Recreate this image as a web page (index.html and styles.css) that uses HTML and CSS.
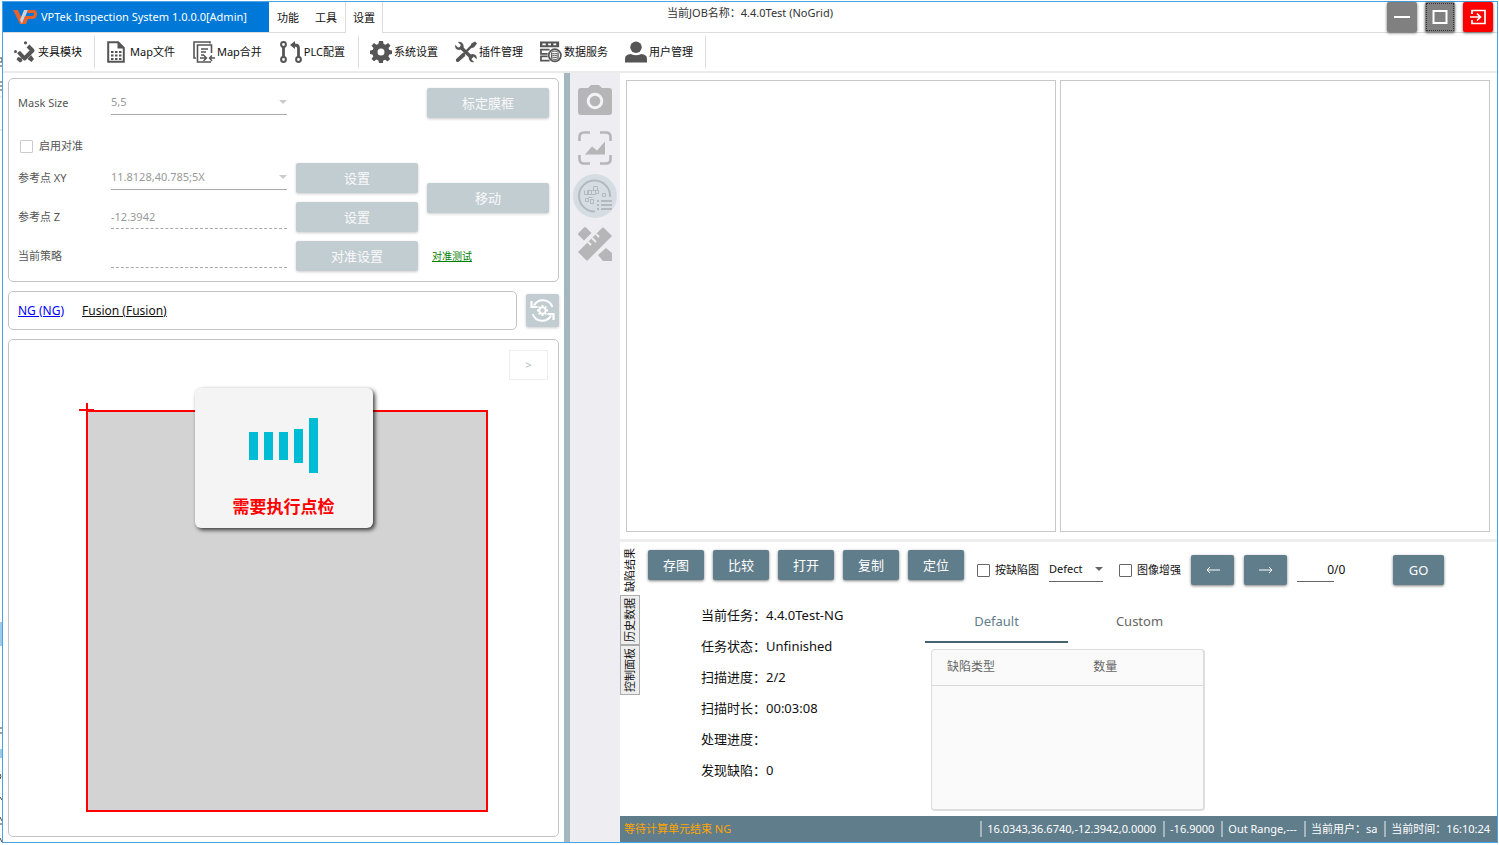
FILE: index.html
```html
<!DOCTYPE html>
<html lang="zh-CN">
<head>
<meta charset="utf-8">
<title>VPTek Inspection System</title>
<link rel="stylesheet" href="styles.css">
</head>
<body>
<svg class="desktop-edge" viewBox="0 0 3 845" aria-hidden="true">
  <path d="M0 58h2v4H0M0 66h2M0 82h2M0 86h3M0 90h2M0 728h2M0 733h2M0 774q2 2 0 5M0 797l2 3M0 817l2 4M0 824h3M0 838l2 4" fill="none" stroke="#444"/>
  <path d="M0 97h3M0 130h3" stroke="#ddd"/>
  <path d="M0 622h2v24H0zM0 749h2v9H0z" fill="#9ccbee"/>
</svg>
<div class="window">
  <header class="titlebar">
    <div class="app-title">
      <svg class="logo" width="24" height="16" viewBox="0 0 24 16" aria-hidden="true">
        <path d="M0 1h5l4 9 2 5H7z" fill="#e8622c"/>
        <path d="M11 1h4L9 15 7 11z" fill="#c9d3df"/>
        <path d="M15 1h6q3 0 3 4t-4 5h-5l-2 5H9l3-8h7q2 0 2-2t-2-1h-5z" fill="#e8622c"/>
      </svg>
      <span>VPTek Inspection System 1.0.0.0[Admin]</span>
    </div>
    <nav class="menu">
      <button class="menu-tab">功能</button>
      <button class="menu-tab">工具</button>
      <button class="menu-tab active">设置</button>
    </nav>
    <div class="job-name">当前JOB名称：4.4.0Test (NoGrid)</div>
    <div class="window-buttons">
      <button class="win-btn" aria-label="Minimize"><svg width="18" height="18" viewBox="0 0 18 18"><path d="M1 9h16" stroke="#fff" stroke-width="2"/></svg></button>
      <button class="win-btn focused" aria-label="Maximize"><svg width="18" height="18" viewBox="0 0 18 18"><rect x="2.500" y="3" width="13" height="12" fill="none" stroke="#fff" stroke-width="2"/></svg></button>
      <button class="win-btn exit" aria-label="Exit"><svg width="18" height="18" viewBox="0 0 18 18"><path d="M3 6V2.500h13v13H3V12M1 9h10M8 5.500 11.500 9 8 12.500" fill="none" stroke="#fff" stroke-width="1.700"/></svg></button>
    </div>
  </header>

  <div class="toolbar">
    <div class="tool-group">
      <button class="tool"><svg width="22" height="22" viewBox="0 0 22 22"><path d="M4.500 11 10.500 17.500 18.500 9.500 14 5" fill="none" stroke="#555" stroke-width="4" stroke-linejoin="round"/><path d="M17 14l3 4-2.500 3-4-3zM4 16l3.500 1 1 3-2.500 1.500-3.500-3z" fill="#555"/><circle cx="11.500" cy="1.800" r="1.600" fill="#555"/><circle cx="1.500" cy="10.500" r="1.500" fill="#555"/></svg>夹具模块</button>
    </div>
    <div class="tool-group wide">
      <button class="tool doc"><svg width="18" height="22" viewBox="0 0 18 22"><path d="M1.200 1.200h10l5.600 5.600v14H1.200z" fill="none" stroke="#555" stroke-width="2"/><path d="M10.500 1v6.500H17z" fill="#555"/><path d="M4 11h2.500M8 11h2.500M12 11h2.500M4 14.500h2.500M8 14.500h2.500M12 14.500h2.500M4 18h2.500M8 18h2.500M12 18h2.500" stroke="#555" stroke-width="1.800"/></svg>Map文件</button>
      <button class="tool"><svg width="22" height="22" viewBox="0 0 22 22"><path d="M17 2.500V1H1v16h2M18.500 12V4H4.500v17h13.500M8 8h7M8 11h5M8 14h3" fill="none" stroke="#555" stroke-width="1.600"/><path d="M7 17h6M10.500 14l3 3-3 3M22 17h-5M19 14.500 16.500 17l2.500 3" fill="none" stroke="#555" stroke-width="1.400"/></svg>Map合并</button>
      <button class="tool"><svg width="22" height="22" viewBox="0 0 22 22"><g fill="none" stroke="#555" stroke-width="2"><circle cx="3.500" cy="3.500" r="2.400"/><circle cx="3.500" cy="18.500" r="2.400"/><circle cx="18.500" cy="18.500" r="2.400"/></g><path d="M3.500 6v10M18.500 16V7q0-3-4-3h-2" fill="none" stroke="#555" stroke-width="2.800"/><path d="M10 4l5-4v8z" fill="#555"/></svg>PLC配置</button>
    </div>
    <div class="tool-group">
      <button class="tool"><svg width="22" height="22" viewBox="0 0 22 22"><path d="M9 0h4l.6 3 2 .8L18.200 2 20.500 4.800 18.500 7l.8 2 2.700.5v3.500l-2.800.6-.8 2 1.800 2.500-2.700 2.300-2.300-1.700-2 .8L13 22H9l-.6-2.600-2-.8L4 20.300 1.500 18l1.800-2.500-.8-2L0 13V9.500L2.700 9l.8-2-2-2.300L4 2l2.400 1.800 2-.8zM11 7.500a3.500 3.500 0 1 0 0 7 3.500 3.500 0 0 0 0-7z" fill="#555" fill-rule="evenodd"/></svg>系统设置</button>
      <button class="tool"><svg width="22" height="22" viewBox="0 0 23 22"><path d="M2 20.500 18.500 3.500" stroke="#555" stroke-width="2.400"/><path d="M1 18.500 8 12l3 3-7.500 6.500q-3 0-2.500-3zM17 2l4-2 2 2-3 4-3 1z" fill="#555"/><path d="M5.500 5.500 18 17.500" stroke="#555" stroke-width="3.600"/><path d="M3 .5 6 3.500l-.6 2.200-2.300.6L.3 3.500Q-.5 7 2.200 8.500q2 1 4 0L9 6.500Q9.500 3 7 1 5-.3 3 .5zM20 21.500l-3-3 .5-2 2.300-.6 2.700 2.700Q23.500 15 20.500 13.500q-2-1-4 .2L14.500 16q-.6 3 1.500 4.800 2 1.500 4 .7z" fill="#555"/></svg>插件管理</button>
      <button class="tool"><svg width="22" height="22" viewBox="0 0 23 22"><path d="M0 0h20v6H0zM2.500 2v2H6V2zm6 0v2h3V2zm5.500 0v2h3V2z" fill="#555" fill-rule="evenodd"/><path d="M10 8.500H1V13h7M8 15.500H1V20h9" fill="none" stroke="#555" stroke-width="1.800"/><circle cx="15.500" cy="14.500" r="6.400" fill="#fff" stroke="#555" stroke-width="1.800"/><ellipse cx="15.500" cy="11.500" rx="3.400" ry="1.400" fill="none" stroke="#555"/><path d="M12 12v6q3.500 2 7 0v-6M12 14q3.500 2 7 0M12 16q3.500 2 7 0" fill="none" stroke="#555"/></svg>数据服务</button>
      <button class="tool"><svg width="22" height="22" viewBox="0 0 23 22"><circle cx="11.500" cy="6" r="6" fill="#555"/><path d="M0 22v-4q0-4.500 6-5 5.500 3 11 0 6 .5 6 5v4z" fill="#555"/></svg>用户管理</button>
    </div>
  </div>

  <main class="main">
    <section class="left">
      <form class="card align-form">
        <label class="f-label" for="mask">Mask Size</label>
        <span class="picker"><select id="mask" disabled><option>5,5</option></select></span>
        <button type="button" class="btn c4" disabled>标定膜框</button>
        <label class="check dim check-row"><input type="checkbox" disabled>启用对准</label>
        <label class="f-label" for="refxy">参考点 XY</label>
        <span class="picker"><select id="refxy" disabled><option>11.8128,40.785;5X</option></select></span>
        <button type="button" class="btn" disabled>设置</button>
        <button type="button" class="btn move" disabled>移动</button>
        <label class="f-label" for="refz">参考点 Z</label>
        <input class="line-input" id="refz" value="-12.3942" disabled>
        <button type="button" class="btn" disabled>设置</button>
        <label class="f-label" for="plan">当前策略</label>
        <input class="line-input" id="plan" disabled>
        <button type="button" class="btn" disabled>对准设置</button>
        <a class="test-link" href="#">对准测试</a>
      </form>

      <div class="link-row">
        <nav class="card links"><a class="blue" href="#">NG (NG)</a><a href="#">Fusion (Fusion)</a></nav>
        <button class="refresh" disabled aria-label="Refresh"><svg width="25" height="25" viewBox="0 0 25 25"><path d="M4 7.500A10 10 0 0 1 22.300 9M2.700 16a10 10 0 0 0 18.300 1.500" fill="none" stroke="#fff" stroke-width="1.900"/><path d="M1.500 3v6h6M23.500 22v-6h-6" fill="none" stroke="#fff" stroke-width="2.200"/><circle cx="12.500" cy="12.500" r="3.200" fill="none" stroke="#fff" stroke-width="2"/><path d="M12.500 7v2.500M12.500 15.500V18M7 12.500h2.500M15.500 12.500H18M8.600 8.600l1.700 1.700M14.700 14.700l1.700 1.700M16.400 8.600l-1.700 1.700M10.300 14.700l-1.700 1.700" stroke="#fff" stroke-width="1.800"/></svg></button>
      </div>

      <div class="card map">
        <svg class="wafer" viewBox="0 0 549 496" aria-hidden="true">
          <rect x="78" y="71" width="400" height="400" fill="#d3d3d3" stroke="#f00" stroke-width="2"/>
          <path d="M70 70h15M78 63v14" stroke="#f00" stroke-width="2"/>
        </svg>
        <button class="expand" disabled>&gt;</button>
        <div class="notice" role="status">
          <svg width="70" height="56" viewBox="0 0 70 56" aria-hidden="true"><path d="M0 14h9v28H0zM15 14h9v28h-9zM30 14h9v28h-9zM45 11h9v34h-9zM60 0h9v55h-9z" fill="#00bcd4"/></svg>
          <p>需要执行点检</p>
        </div>
      </div>
    </section>

    <div class="splitter"></div>

    <aside class="side-tools">
      <button aria-label="Camera"><svg width="34" height="32" viewBox="0 0 34 32"><path d="M3 4h7l3-3h8l3 3h7q3 0 3 3v21q0 3-3 3H3q-3 0-3-3V7q0-3 3-3z" fill="#b6b6b8"/><circle cx="17" cy="17" r="6.800" fill="none" stroke="#f3f3f6" stroke-width="3"/></svg></button>
      <button aria-label="Image"><svg width="34" height="34" viewBox="0 0 34 34"><path d="M1.500 10V6q0-4.500 4.500-4.500h6M22 1.500h6q4.500 0 4.500 4.500v4M32.500 24v4q0 4.500-4.500 4.500h-6M12 32.500H6q-4.500 0-4.500-4.500v-4" fill="none" stroke="#b6b6b8" stroke-width="2.600"/><path d="M7 23.500l7-8 5 4 8-9v13z" fill="#b6b6b8"/></svg></button>
      <button class="selected" aria-label="Wafer map"><svg width="34" height="34" viewBox="0 0 34 34"><path d="M32 18A15.500 15.500 0 1 0 17 32.500" fill="none" stroke="#b3b9be" stroke-width="2"/><path d="M9.500 11.500h4v4h-4zM15.500 7.500h4v4h-4zM17.500 11.500h3v3h-3zM13.500 11.500h4v4h-4zM6.500 15.500h4v-4M6.500 11.500v4M7.500 19.500h3v3h-3zM12.500 20.500h3v4h-3zM10.500 18.500h4M24.500 14.500h3v3h-3z" fill="none" stroke="#b3b9be"/><path d="M19 22h2M23 22h11M19 26h2M23 26h11M19 30h2M23 30h11" stroke="#b3b9be" stroke-width="1.800"/></svg></button>
      <button aria-label="Measure"><svg width="34" height="34" viewBox="0 0 34 34"><path d="M0 25 24 1q1-1 2 0l8 8L10 33q-1 1-2 0z" fill="#b6b6b8"/><path d="M10 15l3 3M14 11l4 4M18 7l3 3" stroke="#ededf2" stroke-width="2"/><path d="M8 .5 13.500 6 6 13.500.5 8q-1-1 0-2L6 .5q1-1 2 0zM28 21l6 5v8h-9l-5-6z" fill="#b6b6b8"/></svg></button>
    </aside>

    <section class="right">
      <div class="views"><div class="view"></div><div class="view"></div></div>
      <div class="bottom">
        <div class="v-tabs">
          <button class="v-tab active">缺陷结果</button>
          <button class="v-tab">历史数据</button>
          <button class="v-tab">控制面板</button>
        </div>
        <div class="results">
          <div class="actions">
            <div class="action-set">
              <button class="btn small">存图</button><button class="btn small">比较</button><button class="btn small">打开</button><button class="btn small">复制</button><button class="btn small">定位</button>
            </div>
            <div class="filter-set">
              <label class="check"><input type="checkbox">按缺陷图</label>
              <span class="picker dark"><select aria-label="Defect"><option>Defect</option></select></span>
              <label class="check enhance"><input type="checkbox">图像增强</label>
              <button class="btn arrow" aria-label="Previous"><svg width="14" height="8" viewBox="0 0 14 8"><path d="M14 4H1M4 1 1 4l3 3" fill="none" stroke="#fff"/></svg></button>
              <button class="btn arrow" aria-label="Next"><svg width="14" height="8" viewBox="0 0 14 8"><path d="M0 4h13M10 1l3 3-3 3" fill="none" stroke="#fff"/></svg></button>
              <div class="pager"><input value="0" aria-label="Page"><span>/0</span></div>
              <button class="btn go">GO</button>
            </div>
          </div>
          <div class="detail">
            <dl class="info">
              <div><dt>当前任务：</dt><dd>4.4.0Test-NG</dd></div>
              <div><dt>任务状态：</dt><dd>Unfinished</dd></div>
              <div><dt>扫描进度：</dt><dd>2/2</dd></div>
              <div><dt>扫描时长：</dt><dd>00:03:08</dd></div>
              <div><dt>处理进度：</dt><dd></dd></div>
              <div><dt>发现缺陷：</dt><dd>0</dd></div>
            </dl>
            <div class="defects">
              <div class="d-tabs"><button class="d-tab active">Default</button><button class="d-tab">Custom</button></div>
              <div class="table-box">
                <table><thead><tr><th>缺陷类型</th><th>数量</th></tr></thead></table>
              </div>
            </div>
          </div>
        </div>
      </div>
      <footer class="status">
        <span class="state">等待计算单元结束 NG</span>
        <span class="s-item">16.0343,36.6740,-12.3942,0.0000</span>
        <span class="s-item">-16.9000</span>
        <span class="s-item">Out Range,---</span>
        <span class="s-item">当前用户：sa</span>
        <span class="s-item">当前时间：16:10:24</span>
      </footer>
    </section>
  </main>
</div>
</body>
</html>
```
FILE: styles.css
```css
* { box-sizing: border-box; }
body {
  margin: 0;
  height: 100vh;
  padding: 1px 1px 2px 2px;
  background: #fff;
  color: #111;
  font: 11px/16px "Noto Sans", "Noto Sans CJK SC", sans-serif;
}
button, input, select { font: inherit; color: inherit; margin: 0; padding: 0; border: 0; background: none; }
svg { display: block; flex: none; }
.desktop-edge { position: absolute; left: 0; top: 0; width: 3px; height: 845px; }

.window {
  position: relative;
  display: flex;
  flex-direction: column;
  height: 100%;
  border: 1px solid #4ba3e3;
  background: #fff;
}

.titlebar { position: relative; display: flex; flex: none; height: 31px; border-bottom: 1px solid #dcdcdc; }
.app-title {
  display: flex;
  align-items: center;
  gap: 4px;
  width: 266px;
  padding-left: 10px;
  background: #0078d7;
  color: #fff;
  white-space: nowrap;
}
.menu { display: flex; }
.menu-tab { width: 38px; height: 31px; }
.menu-tab.active { background: #fff; border: 1px solid #dcdcdc; border-width: 0 1px; }
.job-name { position: absolute; left: 0; right: 0; top: 3px; text-align: center; color: #333; pointer-events: none; }
.window-buttons { display: flex; gap: 8px; margin-left: auto; padding-right: 4px; }
.win-btn {
  display: flex;
  align-items: center;
  justify-content: center;
  width: 30px;
  height: 30px;
  border-radius: 2px;
  background: #808080;
  box-shadow: 0 1px 3px rgba(0, 0, 0, .6);
}
.win-btn.focused { outline: 1px dotted #333; outline-offset: -2px; }
.win-btn.exit { background: #f00; }

.toolbar { display: flex; align-items: center; flex: none; height: 40px; border-bottom: 2px solid #ebebeb; }
.tool-group { display: flex; align-items: center; gap: 17px; height: 32px; padding: 0 12px 0 11px; border-right: 1px solid #dcdcdc; }
.tool-group.wide { gap: 18px; padding: 0 13px 0 12px; }
.tool { display: flex; align-items: center; gap: 2px; white-space: nowrap; }
.tool.doc { gap: 5px; }

.main { flex: 1; display: grid; grid-template-columns: 561fr 6px 50px 877fr; min-height: 0; }
.left { display: flex; flex-direction: column; gap: 9px; padding: 5px; min-width: 0; }
.card { border: 1px solid #c4c4c4; border-radius: 5px; background: #fff; }
.splitter { background: #a4b6bf; }

.align-form {
  display: grid;
  grid-template-columns: 84px minmax(0, 1fr) 122px 122px;
  grid-template-rows: 30px 27px 30px 30px 30px;
  gap: 9px;
  padding: 9px 9px 10px;
}
.f-label { align-self: center; color: #555; }
.picker { position: relative; align-self: center; height: 24px; border-bottom: 1px solid #aaa; color: #999; }
.picker select { width: 100%; height: 22px; appearance: none; opacity: 1; }
.picker::after {
  content: "";
  position: absolute;
  right: 0;
  top: 9px;
  border: 4px solid transparent;
  border-top-color: #ccc;
  border-bottom: 0;
  pointer-events: none;
}
.btn {
  display: flex;
  align-items: center;
  justify-content: center;
  height: 30px;
  border-radius: 2px;
  background: #607d8b;
  color: #fff;
  font-size: 13px;
  box-shadow: 0 1px 3px rgba(0, 0, 0, .5);
}
.btn:disabled { background: #c2cdd2; color: #fafafa; box-shadow: 0 1px 3px rgba(0, 0, 0, .2); }
.c4 { grid-column: 4; }
.check { display: flex; align-items: center; gap: 5px; white-space: nowrap; }
.check input { appearance: none; width: 13px; height: 13px; border: 1px solid #666; border-radius: 1px; }
.check.dim { gap: 6px; color: #555; }
.check.dim input { border-color: #ccc; }
.check-row { grid-column: 1 / 5; align-self: end; padding-left: 2px; }
.move { grid-column: 4; grid-row: 3 / 5; align-self: center; }
.line-input { align-self: center; width: 100%; height: 24px; border-bottom: 1px dashed #aaa; color: #999; }
.test-link { align-self: center; padding-left: 5px; color: #008000; font-size: 10px; }

.link-row { display: flex; align-items: center; gap: 9px; }
.links { flex: 1; display: flex; align-items: center; gap: 18px; height: 39px; padding: 0 9px; font-size: 12px; }
.links a { color: #111; }
.links a.blue { color: #00f; }
.refresh {
  display: flex;
  align-items: center;
  justify-content: center;
  width: 33px;
  height: 33px;
  border-radius: 2px;
  background: #c2cdd2;
  box-shadow: 0 1px 3px rgba(0, 0, 0, .2);
}

.map { position: relative; flex: 1; min-height: 0; }
.wafer { width: 100%; height: 100%; }
.expand { position: absolute; right: 10px; top: 10px; width: 39px; height: 30px; border: 1px solid #eee; color: #bbb; }
.notice {
  position: absolute;
  top: 48px;
  left: 50%;
  transform: translateX(-50%);
  display: flex;
  flex-direction: column;
  align-items: center;
  gap: 21px;
  width: 178px;
  height: 140px;
  padding-top: 30px;
  border-radius: 6px;
  background: #f4f4f4;
  box-shadow: 2px 2px 4px rgba(0, 0, 0, .75);
}
.notice p { margin: 0; color: #f00; font-size: 17px; font-weight: 700; line-height: 24px; }

.side-tools { display: flex; flex-direction: column; align-items: center; gap: 4px; padding-top: 5px; background: #ededf2; }
.side-tools button { display: flex; align-items: center; justify-content: center; width: 44px; height: 44px; border-radius: 50%; }
.side-tools .selected { background: #d6dde2; }

.right { display: flex; flex-direction: column; min-width: 0; }
.views { flex: 1; display: flex; gap: 4px; padding: 7px 7px 7px 6px; }
.view { flex: 1; border: 1px solid #c8c8c8; }
.bottom { display: flex; height: 277px; border-top: 3px solid #eee; }
.v-tabs { width: 20px; padding-top: 3px; }
.v-tab {
  display: flex;
  align-items: center;
  justify-content: center;
  width: 20px;
  height: 50px;
  border: 1px solid #acacac;
  background: #eee;
  writing-mode: vertical-rl;
  text-orientation: sideways;
  transform: rotate(180deg);
  white-space: nowrap;
}
.v-tab.active { border-color: transparent; background: #fff; }
.results { flex: 1; padding: 8px 8px 0; }
.actions { display: flex; align-items: flex-start; gap: 13px; height: 50px; }
.action-set { display: flex; gap: 9px; }
.btn.small { width: 56px; }
.filter-set { display: flex; align-items: center; gap: 10px; padding-top: 5px; }
.picker.dark { width: 54px; border-color: #666; color: #111; }
.picker.dark::after { border-top-color: #666; }
.enhance { margin-left: 6px; }
.arrow { width: 43px; }
.pager { display: flex; align-items: center; width: 86px; font-size: 12px; }
.pager input { width: 37px; height: 24px; border-bottom: 1px solid #666; text-align: right; }
.go { width: 51px; }

.detail { display: flex; padding-left: 53px; }
.info { margin: 0; width: 224px; font-size: 13px; line-height: 30px; }
.info div { display: flex; height: 31px; }
.info dd { margin: 0; }
.defects { width: 286px; }
.d-tabs { display: flex; }
.d-tab { flex: 1; height: 43px; font-size: 13px; color: #666; border-bottom: 2px solid transparent; }
.d-tab.active { color: #607d8b; border-color: #466170; }
.table-box { height: 162px; margin: 6px 6px 0; border: 2px solid #ddd; border-width: 1px 2px 2px 1px; border-radius: 4px; background: #fafafa; }
table { width: 100%; border-collapse: collapse; }
th { height: 35px; padding: 0 0 0 15px; border-bottom: 1px solid #d8d8d8; color: #666; font-size: 12px; font-weight: 400; text-align: left; }
th:first-child { width: 54%; }

.status { display: flex; align-items: center; gap: 7px; height: 26px; padding: 0 7px 0 4px; background: #607d8b; color: #fff; white-space: nowrap; }
.state { margin-right: auto; color: #ffa500; }
.s-item { border-left: 2px solid #a7b5bc; padding-left: 5px; }
```
